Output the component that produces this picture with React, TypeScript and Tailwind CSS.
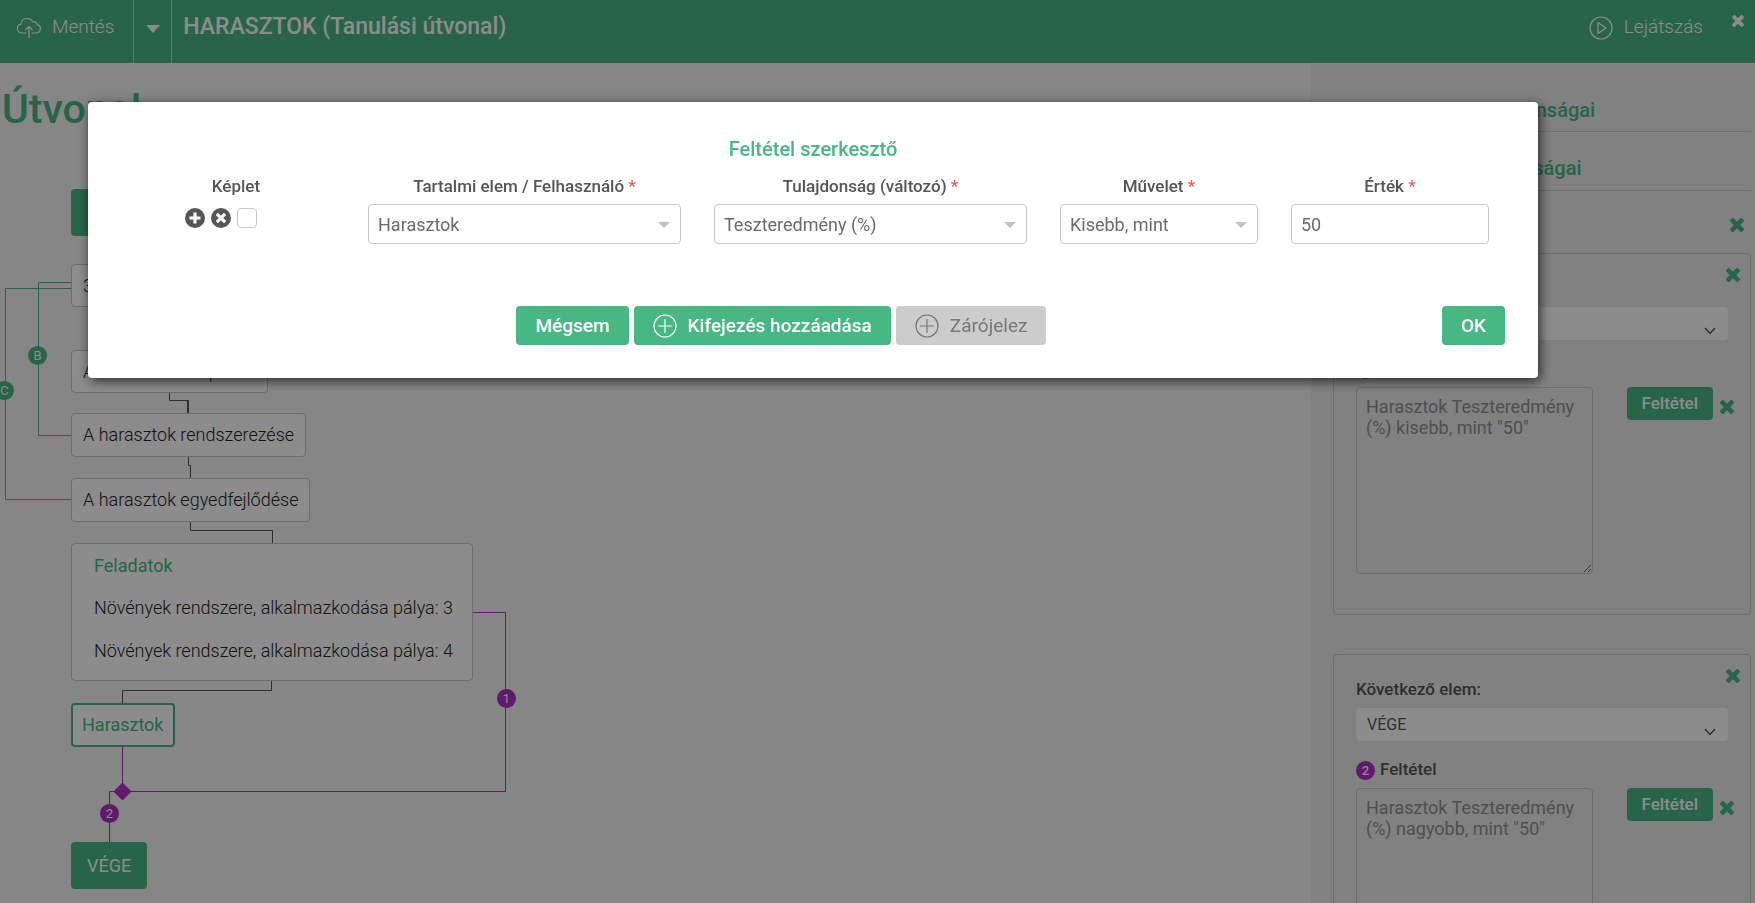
import { useId } from "react";
import type { ReactNode } from "react";

function CrossIcon({ className }: { className?: string }) {
  return (
    <svg viewBox="302 366 1188 1188" className={className} aria-hidden="true">
      <path
        fill="currentColor"
        d="M1490 1322q0 40-28 68l-136 136q-28 28-68 28t-68-28l-294-294-294 294q-28 28-68 28t-68-28l-136-136q-28-28-28-68t28-68l294-294-294-294q-28-28-28-68t28-68l136-136q28-28 68-28t68 28l294 294 294-294q28-28 68-28t68 28l136 136q28 28 28 68t-28 68l-294 294 294 294q28 28 28 68z"
      />
    </svg>
  );
}

function CloudUploadIcon() {
  return (
    <svg viewBox="0 0 26 22" className="h-[22px] w-[26px]" fill="none" stroke="currentColor" strokeWidth="1.2" strokeLinecap="round" strokeLinejoin="round" aria-hidden="true">
      <path d="M10 16H6a4.5 4.5 0 0 1-1-8.900C5.400 3.500 8 1.500 11 1.500c2.800 0 4.700 1.300 5.700 3.300 2.300-.6 4.300.9 4.500 2.900 1.900.4 3.200 1.900 3.200 4 0 2.400-1.800 4.300-4.200 4.300H16" />
      <path d="M13 20.500V9.500M9.800 12.700 13 9.500l3.200 3.200" />
    </svg>
  );
}

function PlayIcon() {
  return (
    <svg viewBox="0 0 24 24" className="size-6" fill="none" stroke="currentColor" strokeWidth="1.2" strokeLinejoin="round" aria-hidden="true">
      <circle cx="12" cy="12" r="11" />
      <path d="M9 6.500v11l8-5.500z" />
    </svg>
  );
}

function PlusCircleIcon() {
  return (
    <svg viewBox="0 0 24 24" className="size-6" fill="none" stroke="currentColor" strokeWidth="1.2" strokeLinecap="round" aria-hidden="true">
      <circle cx="12" cy="12" r="11" />
      <path d="M12 5.500v13M5.500 12h13" />
    </svg>
  );
}

function Header() {
  return (
    <header className="flex h-[63px] bg-[#47b784] text-white">
      <button type="button" className="flex items-center gap-[10px] pr-[19px] pb-2 pl-4 text-[19px] font-light">
        <CloudUploadIcon />
        Mentés
      </button>
      <button type="button" aria-label="Mentési lehetőségek" className="flex w-[39px] items-center justify-center border-x border-white/60 pb-[6px]">
        <svg viewBox="0 0 16 8" className="h-2 w-4" aria-hidden="true">
          <path d="M1 0h14L8 8z" fill="currentColor" />
        </svg>
      </button>
      <h1 className="flex-1 pt-[13px] pl-[11px] text-[23px] leading-7 font-medium">HARASZTOK (Tanulási útvonal)</h1>
      <button type="button" className="flex items-center gap-[11px] pb-2 text-[19px] font-light">
        <PlayIcon />
        Lejátszás
      </button>
      <button type="button" aria-label="Bezárás" className="ml-[29px] flex w-[23px] items-start pt-[15px]">
        <CrossIcon className="size-3" />
      </button>
    </header>
  );
}

function Badge({ children, className }: { children: ReactNode; className: string }) {
  return (
    <span className={`flex size-[19px] items-center justify-center rounded-full text-[13px] leading-none text-white ${className}`}>
      {children}
    </span>
  );
}

const nodeBox = "absolute left-[71px] flex items-center rounded border border-[#c8c8c8] bg-white font-light whitespace-nowrap";

function PathCanvas() {
  return (
    <main className="relative min-w-0 flex-1 overflow-hidden bg-[#f4f4f4] text-lg text-[#222]">
      <h2 className="pt-4 pl-[2px] text-[41px] leading-[60px] font-medium text-[#47b784]">Útvonal</h2>
      <svg className="absolute top-0 left-0 h-[840px] w-[560px]" fill="none" aria-hidden="true">
        <g transform="translate(0 -63)">
          <g stroke="#47b784">
            <path d="M71 282.500H38.500V435.500H71" />
            <path d="M71 288.500H5.500V499.500H71" />
          </g>
          <g stroke="#555">
            <path d="M169.500 392V400.500H188.500V413" />
            <path d="M187.500 400V413" />
            <path d="M188.500 456V465.500H190.500V478" />
            <path d="M190.500 521V530.500H272.500V543" />
            <path d="M271.500 681V690.500H122.500V703" />
          </g>
          <g stroke="#b030c4">
            <path d="M473 612.500H505.500V791.500H109.500V842" />
            <path d="M122.500 747V791" />
            <path d="M122.500 783L131 791.500 122.500 800 114 791.500z" fill="#b030c4" />
          </g>
        </g>
      </svg>
      <div className="absolute top-[126px] left-[71px] flex h-[47px] items-center rounded bg-[#47b784] px-4 text-white">KEZDÉS</div>
      <div className={`${nodeBox} top-[201px] h-[43px] px-[11px]`}>3. lecke</div>
      <div className={`${nodeBox} top-[287px] h-[43px] px-[11px]`}>A harasztok felépítése</div>
      <div className={`${nodeBox} top-[350px] h-11 px-[11px]`}>A harasztok rendszerezése</div>
      <div className={`${nodeBox} top-[415px] h-11 px-[11px]`}>A harasztok egyedfejlődése</div>
      <div className="absolute top-[480px] left-[71px] h-[138px] rounded border border-[#c8c8c8] bg-white pr-[19px] pl-[22px] font-light whitespace-nowrap">
        <h3 className="pt-1 leading-9 font-normal text-[#47b784]">Feladatok</h3>
        <p className="pt-1 leading-10">Növények rendszere, alkalmazkodása pálya: 3</p>
        <p className="pt-[3px] leading-10">Növények rendszere, alkalmazkodása pálya: 4</p>
      </div>
      <div className="absolute top-[640px] left-[71px] flex h-11 items-center rounded border-2 border-[#47b784] bg-white px-[9px] text-[#47b784]">Harasztok</div>
      <div className="absolute top-[779px] left-[71px] flex h-[47px] items-center rounded bg-[#47b784] px-4 text-white">VÉGE</div>
      <Badge className="absolute top-[283px] left-[28px] bg-[#47b784]">B</Badge>
      <Badge className="absolute top-[318px] left-[-5px] bg-[#47b784]">C</Badge>
      <Badge className="absolute top-[626px] left-[497px] bg-[#b030c4]">1</Badge>
      <Badge className="absolute top-[741px] left-[100px] bg-[#b030c4]">2</Badge>
    </main>
  );
}

function ConditionCard({ target, badge, condition }: { target: string; badge: string; condition: string }) {
  const id = useId();
  return (
    <section className="relative rounded border border-[#c8c8c8] px-[22px] pt-[22px] pb-10 text-[17px]">
      <button type="button" aria-label="Elem törlése" className="absolute top-[14px] right-[10px] text-[#47b784]">
        <CrossIcon className="size-[14px]" />
      </button>
      <label htmlFor={`${id}-next`} className="block leading-6 font-medium text-[#555]">Következő elem:</label>
      <div className="relative mt-[7px]">
        <select id={`${id}-next`} className="block h-[33px] w-full appearance-none rounded bg-white px-[11px] text-base leading-5 text-[#555]">
          <option>{target}</option>
        </select>
        <svg viewBox="0 0 12 8" className="pointer-events-none absolute right-3 bottom-[5px] h-2 w-3 text-[#555]" fill="none" stroke="currentColor" strokeWidth="1.5" aria-hidden="true">
          <path d="M1 1l5 5.500L11 1" />
        </svg>
      </div>
      <div className="mt-[17px] flex h-6 items-center gap-[5px]">
        <Badge className="bg-[#b030c4] font-medium">{badge}</Badge>
        <label htmlFor={`${id}-cond`} className="font-medium text-[#555]">Feltétel</label>
      </div>
      <div className="mt-[6px] flex items-start">
        <textarea id={`${id}-cond`} readOnly defaultValue={condition} className="block h-[187px] w-[237px] resize rounded border border-[#c8c8c8] bg-transparent px-[9px] py-2 text-lg leading-[21px] text-[#909090]" />
        <button type="button" className="ml-auto h-[33px] rounded bg-[#47b784] px-[15px] pb-[2px] leading-5 font-medium text-white">Feltétel</button>
        <button type="button" aria-label="Feltétel törlése" className="mt-[13px] -mr-[6px] ml-[7px] text-[#47b784]">
          <CrossIcon className="size-[14px]" />
        </button>
      </div>
    </section>
  );
}

function Sidebar() {
  return (
    <aside className="w-[444px] shrink-0 overflow-hidden bg-[#ebebeb] pr-1 pl-[22px] text-base">
      <h2 className="mt-[29px] border-b border-[#c8c8c8] pb-[3px] pl-3 text-xl leading-9 font-medium text-[#47b784]">Tananyagrész tulajdonságai</h2>
      <h2 className="mt-[18px] border-b border-[#c8c8c8] pb-1 pl-3 text-xl leading-9 font-medium text-[#47b784]">Kapcsolatok tulajdonságai</h2>
      <div className="flex h-[62px] justify-end pt-[27px] pr-[7px]">
        <button type="button" aria-label="Összes törlése" className="self-start text-[#47b784]">
          <CrossIcon className="size-[14px]" />
        </button>
      </div>
      <div className="flex flex-col gap-[39px]">
        <ConditionCard target="Feladatok" badge="1" condition={'Harasztok Teszteredmény (%) kisebb, mint "50"'} />
        <ConditionCard target="VÉGE" badge="2" condition={'Harasztok Teszteredmény (%) nagyobb, mint "50"'} />
      </div>
    </aside>
  );
}

const control = "block h-10 w-full appearance-none rounded border border-[#c8c8c8] bg-white px-[9px] pt-px text-lg text-[#6b6b6b]";

function FieldLabel({ htmlFor, children }: { htmlFor: string; children: ReactNode }) {
  return (
    <label htmlFor={htmlFor} className="block pb-[6px] text-center text-[17px] leading-6 font-medium text-[#555]">
      {children} <span className="text-[#f0564a]">*</span>
    </label>
  );
}

function SelectField({ label, value }: { label: string; value: string }) {
  const id = useId();
  return (
    <div>
      <FieldLabel htmlFor={id}>{label}</FieldLabel>
      <div className="relative">
        <select id={id} className={control}>
          <option>{value}</option>
        </select>
        <svg viewBox="0 0 12 6" className="pointer-events-none absolute top-[18px] right-[11px] h-[6px] w-3" aria-hidden="true">
          <path d="M0 0h12L6 6z" fill="#c0c4c7" />
        </svg>
      </div>
    </div>
  );
}

const dialogButton = "flex h-[39px] items-center gap-[11px] rounded px-[19px] pt-px text-[19px]";
const greenButton = `${dialogButton} bg-[#47b784] font-medium text-white`;

function ConditionDialog() {
  return (
    <div className="fixed inset-0 bg-black/45 pt-[102px] pr-[217px] pl-[88px]">
      <div role="dialog" aria-modal="true" aria-labelledby="dialog-title" className="rounded bg-white pt-[33px] pb-[33px] shadow-[2px_3px_12px_rgba(0,0,0,0.7)]">
        <h2 id="dialog-title" className="text-center text-xl leading-7 font-medium text-[#47b784]">Feltétel szerkesztő</h2>
        <div className="mt-[11px] grid grid-cols-[198fr_313fr_313fr_198fr_198fr] gap-x-[33px] px-[49px]">
          <div>
            <div className="text-center text-[17px] leading-6 font-medium text-[#555]">Képlet</div>
            <div className="mt-[10px] flex items-center gap-[6px] pl-12">
              <button type="button" aria-label="Hozzáadás" className="flex size-5 items-center justify-center rounded-full bg-[#555] text-white">
                <svg viewBox="0 0 12 12" className="size-3" aria-hidden="true">
                  <path d="M6 0.500v11M0.500 6h11" stroke="currentColor" strokeWidth="3.200" />
                </svg>
              </button>
              <button type="button" aria-label="Törlés" className="flex size-5 items-center justify-center rounded-full bg-[#555] text-white">
                <CrossIcon className="size-[10px]" />
              </button>
              <input type="checkbox" aria-label="Kijelölés" className="size-5 appearance-none rounded border border-[#c8c8c8] bg-white" />
            </div>
          </div>
          <SelectField label="Tartalmi elem / Felhasználó" value="Harasztok" />
          <SelectField label="Tulajdonság (változó)" value="Teszteredmény (%)" />
          <SelectField label="Művelet" value="Kisebb, mint" />
          <div>
            <FieldLabel htmlFor="value-field">Érték</FieldLabel>
            <input id="value-field" type="text" defaultValue="50" className={control} />
          </div>
        </div>
        <div className="mt-[62px] flex px-[33px]">
          <div className="flex flex-1 justify-center gap-[5px]">
            <button type="button" className={greenButton}>Mégsem</button>
            <button type="button" className={greenButton}>
              <PlusCircleIcon />
              Kifejezés hozzáadása
            </button>
            <button type="button" disabled className={`${dialogButton} bg-[#ccc] text-[#777]`}>
              <PlusCircleIcon />
              Zárójelez
            </button>
          </div>
          <button type="button" className={greenButton}>OK</button>
        </div>
      </div>
    </div>
  );
}

export default function App() {
  return (
    <div className="flex h-screen flex-col overflow-hidden font-['Roboto',sans-serif]">
      <Header />
      <div className="flex min-h-0 flex-1">
        <PathCanvas />
        <Sidebar />
      </div>
      <ConditionDialog />
    </div>
  );
}
